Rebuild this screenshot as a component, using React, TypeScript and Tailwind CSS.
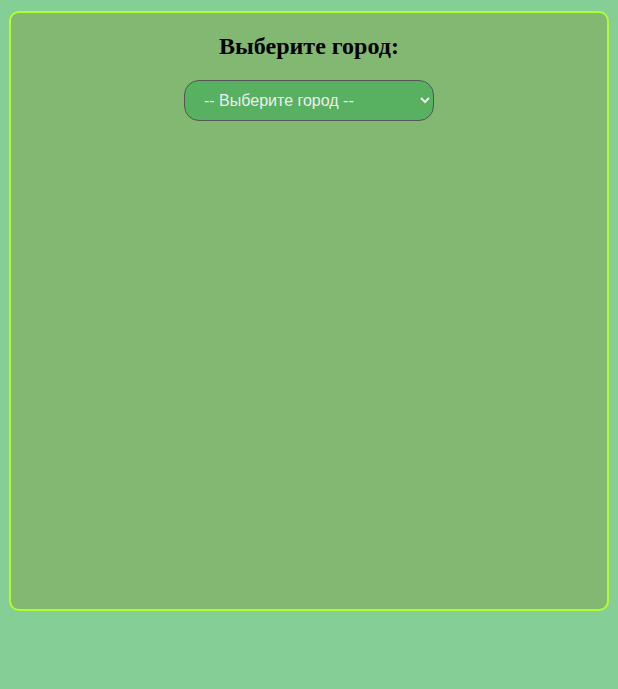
export default function App() {
  return (
    <div className="min-h-[689px] bg-[#85cf96] pt-[11px]">
      <div className="mx-auto w-[600px] h-[600px] rounded-[10px] border-2 border-[#adff2f] bg-[#82b871] p-5 text-center">
        <h2 className="text-[24px] font-bold text-black mb-[16px] -mt-[5px]" style={{ fontFamily: '"Liberation Serif", serif' }}>
          Выберите город:
        </h2>
        <select
          defaultValue=""
          className="w-[250px] h-[41px] rounded-[15px] border border-[#555] bg-[#57b160] pl-[15px] pr-1 text-[16px] text-[#eeeeee]"
          style={{ fontFamily: '"Liberation Sans", Arial, sans-serif' }}
        >
          <option value="">-- Выберите город --</option>
        </select>
      </div>
    </div>
  );
}
